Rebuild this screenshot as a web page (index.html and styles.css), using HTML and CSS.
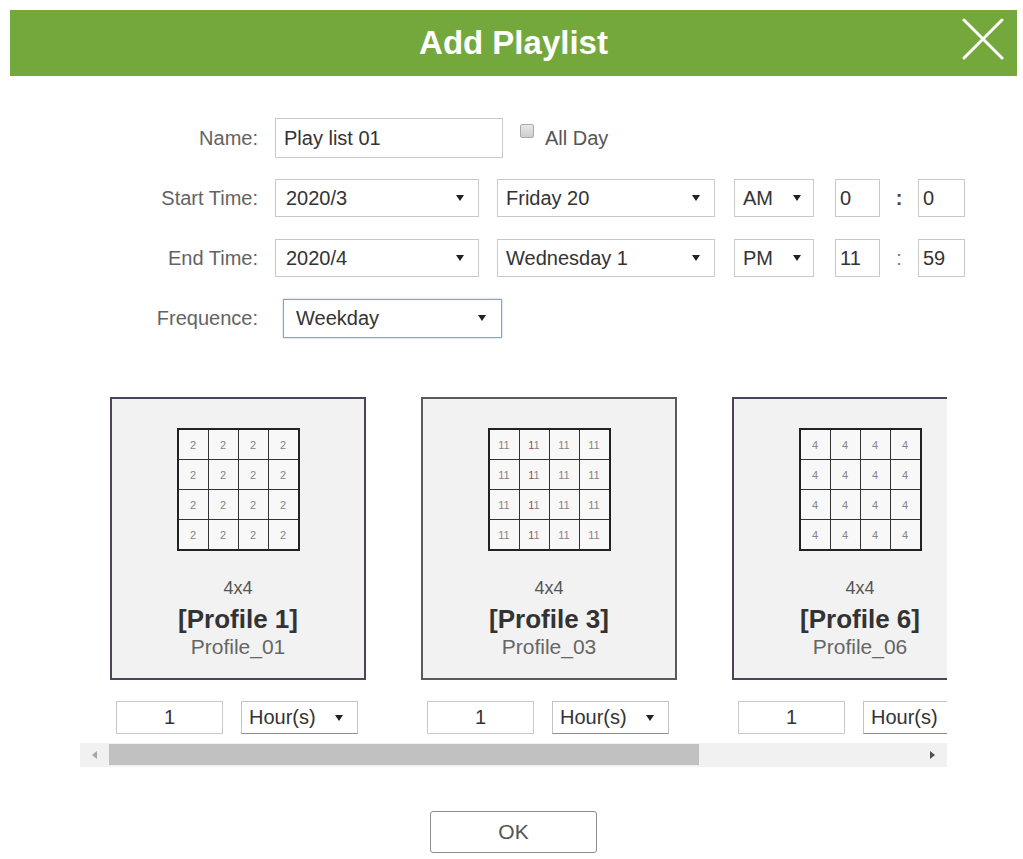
FILE: index.html
```html
<!DOCTYPE html>
<html lang="en">
<head>
    <meta charset="UTF-8">
    <title>Add Playlist</title>
    <link rel="stylesheet" href="styles.css">
</head>
<body>
    <div class="dialog">
        <div class="dialog-header">
            <h1>Add Playlist</h1>
            <span class="close">
                <svg width="42" height="42" viewBox="0 0 42 42">
                    <path d="M2 2 L40 40 M40 2 L2 40" stroke="#fff" stroke-width="3" stroke-linecap="round" fill="none"/>
                </svg>
            </span>
        </div>

        <div class="form">
            <div class="row">
                <span class="label">Name:</span>
                <input class="field w-name" type="text" value="Play list 01">
                <span class="check"></span>
                <span class="check-label">All Day</span>
            </div>
            <div class="row">
                <span class="label">Start Time:</span>
                <div class="field select w-month"><span>2020/3</span><span class="arrow"></span></div>
                <div class="field select w-day"><span>Friday 20</span><span class="arrow"></span></div>
                <div class="field select w-ampm"><span>AM</span><span class="arrow"></span></div>
                <input class="field w-hour" type="text" value="0">
                <span class="colon">:</span>
                <input class="field w-min" type="text" value="0">
            </div>
            <div class="row">
                <span class="label">End Time:</span>
                <div class="field select w-month"><span>2020/4</span><span class="arrow"></span></div>
                <div class="field select w-day"><span>Wednesday 1</span><span class="arrow"></span></div>
                <div class="field select w-ampm"><span>PM</span><span class="arrow"></span></div>
                <input class="field w-hour" type="text" value="11">
                <span class="colon light">:</span>
                <input class="field w-min" type="text" value="59">
            </div>
            <div class="row">
                <span class="label">Frequence:</span>
                <div class="field select w-freq focus"><span>Weekday</span><span class="arrow"></span></div>
            </div>
        </div>

        <div class="strip">
            <div class="track">
                <div class="slot">
                    <div class="card">
                        <table class="cells">
                            <tr><td>2</td><td>2</td><td>2</td><td>2</td></tr>
                            <tr><td>2</td><td>2</td><td>2</td><td>2</td></tr>
                            <tr><td>2</td><td>2</td><td>2</td><td>2</td></tr>
                            <tr><td>2</td><td>2</td><td>2</td><td>2</td></tr>
                        </table>
                        <div class="grid-size">4x4</div>
                        <div class="profile-name">[Profile 1]</div>
                        <div class="profile-id">Profile_01</div>
                    </div>
                    <div class="dur">
                        <input class="field dur-input" type="text" value="1">
                        <div class="field select dur-select"><span>Hour(s)</span><span class="arrow"></span></div>
                    </div>
                </div>

                <div class="slot">
                    <div class="card plain">
                        <table class="cells">
                            <tr><td>11</td><td><span class="red">1</span>1</td><td>11</td><td>11</td></tr>
                            <tr><td>11</td><td><span class="red">1</span>1</td><td>11</td><td>11</td></tr>
                            <tr><td>11</td><td><span class="red">1</span>1</td><td>11</td><td>11</td></tr>
                            <tr><td>11</td><td><span class="red">1</span>1</td><td>11</td><td>11</td></tr>
                        </table>
                        <div class="grid-size">4x4</div>
                        <div class="profile-name">[Profile 3]</div>
                        <div class="profile-id">Profile_03</div>
                    </div>
                    <div class="dur">
                        <input class="field dur-input" type="text" value="1">
                        <div class="field select dur-select"><span>Hour(s)</span><span class="arrow"></span></div>
                    </div>
                </div>

                <div class="slot">
                    <div class="card">
                        <table class="cells">
                            <tr><td>4</td><td>4</td><td>4</td><td>4</td></tr>
                            <tr><td>4</td><td>4</td><td>4</td><td>4</td></tr>
                            <tr><td>4</td><td>4</td><td>4</td><td>4</td></tr>
                            <tr><td>4</td><td>4</td><td>4</td><td>4</td></tr>
                        </table>
                        <div class="grid-size">4x4</div>
                        <div class="profile-name">[Profile 6]</div>
                        <div class="profile-id">Profile_06</div>
                    </div>
                    <div class="dur">
                        <input class="field dur-input" type="text" value="1">
                        <div class="field select dur-select"><span>Hour(s)</span><span class="arrow"></span></div>
                    </div>
                </div>
            </div>
        </div>

        <div class="scrollbar">
            <span class="sb-btn"><span class="tri-left"></span></span>
            <span class="thumb"></span>
            <span class="sb-space"></span>
            <span class="sb-btn"><span class="tri-right"></span></span>
        </div>

        <div class="actions">
            <button class="btn-ok">OK</button>
        </div>
    </div>
</body>
</html>
```

FILE: styles.css
```css
body {
    margin: 0;
    background: #fff;
    font-family: "Liberation Sans", Arial, sans-serif;
}
.dialog {
    margin: 10px 6px 0 10px;
}
.dialog-header {
    position: relative;
    height: 66px;
    background: #74a83c;
    display: flex;
    align-items: center;
    justify-content: center;
}
.dialog-header h1 {
    margin: 0;
    color: #fff;
    font-size: 33px;
    font-weight: bold;
}
.close {
    position: absolute;
    right: 13px;
    top: 8px;
    width: 42px;
    height: 42px;
}

/* form */
.form {
    padding-top: 43px;
}
.row {
    display: flex;
    align-items: center;
    height: 38px;
    margin-bottom: 22px;
}
.row:last-child { margin-bottom: 0; }
.label {
    width: 248px;
    margin-right: 17px;
    text-align: right;
    font-size: 20px;
    color: #636363;
}
.field {
    box-sizing: border-box;
    height: 38px;
    border: 1px solid #c9c9c9;
    background: #fff;
    font-family: inherit;
    font-size: 20px;
    color: #333;
}
input.field {
    padding: 0 4px;
    outline: none;
}
.select {
    display: flex;
    align-items: center;
    justify-content: space-between;
    padding: 0 14px 0 10px;
}
.arrow {
    width: 0;
    height: 0;
    border-left: 4px solid transparent;
    border-right: 4px solid transparent;
    border-top: 6px solid #222;
}
.w-name { width: 228px; padding-left: 8px !important; height: 40px; }
.w-month { width: 204px; margin-right: 18px; }
.w-day { width: 218px; margin-right: 19px; padding-left: 8px; }
.w-ampm { width: 80px; margin-right: 21px; padding: 0 12px 0 8px; }
.w-hour { width: 45px; }
.w-min { width: 47px; }
.w-freq { width: 219px; height: 39px; margin-left: 8px; padding: 0 15px 0 12px; }
.focus {
    border-color: #87a3cc;
    box-shadow: 0 0 2px #a9c0e2;
}
.colon {
    width: 38px;
    text-align: center;
    font-size: 20px;
    font-weight: bold;
    color: #444;
}
.colon.light { font-weight: normal; color: #777; }
.check {
    box-sizing: border-box;
    width: 14px;
    height: 14px;
    margin: 0 0 14px 17px;
    border: 1px solid #ababab;
    border-radius: 2px;
    background: linear-gradient(#e8e8e8, #cdcdcd);
}
.check-label {
    margin-left: 11px;
    font-size: 20px;
    color: #555;
}

/* profiles */
.strip {
    width: 867px;
    margin: 60px 0 0 70px;
    overflow: hidden;
}
.track {
    display: flex;
    gap: 55px;
    padding-left: 30px;
}
.slot {
    flex: 0 0 256px;
}
.card {
    box-sizing: border-box;
    height: 283px;
    padding-top: 29px;
    border: 2px solid #4e4358;
    background: #f2f2f2;
    text-align: center;
}
.card.plain { border-color: #5a5a5a; }
.cells {
    margin: 0 auto;
    border-collapse: collapse;
    border: 2px solid #222;
}
.cells td {
    width: 29px;
    height: 29px;
    padding: 0;
    border: 1px solid #333;
    background: #f8f8f8;
    font-size: 11px;
    color: #858585;
    text-align: center;
}
.red { color: #a5445a; }
.grid-size {
    margin-top: 26px;
    font-size: 18px;
    line-height: 22px;
    color: #555;
}
.profile-name {
    margin-top: 5px;
    font-size: 26px;
    line-height: 30px;
    font-weight: bold;
    color: #333;
}
.profile-id {
    font-size: 21px;
    line-height: 25px;
    color: #666;
}
.dur {
    display: flex;
    gap: 18px;
    margin-top: 21px;
    padding-left: 6px;
}
.dur-input {
    width: 107px;
    height: 33px;
    text-align: center;
}
.dur-select {
    width: 117px;
    height: 33px;
    padding: 0 14px 0 7px;
    border-color: #c4c4c4;
    border-bottom-color: #8f8f8f;
}

/* fake horizontal scrollbar */
.scrollbar {
    display: flex;
    width: 867px;
    height: 24px;
    margin: 9px 0 0 70px;
    background: #f1f1f1;
}
.sb-btn {
    width: 29px;
    display: flex;
    align-items: center;
    justify-content: center;
}
.tri-left {
    border-top: 4px solid transparent;
    border-bottom: 4px solid transparent;
    border-right: 5px solid #a6a6a6;
}
.tri-right {
    border-top: 4px solid transparent;
    border-bottom: 4px solid transparent;
    border-left: 5px solid #505050;
}
.thumb {
    width: 590px;
    margin: 1px 0 2px;
    background: #c1c1c1;
}
.sb-space { flex: 1; }

.actions {
    display: flex;
    justify-content: center;
    margin-top: 44px;
}
.btn-ok {
    width: 167px;
    height: 42px;
    border: 1px solid #8c8c8c;
    border-radius: 3px;
    background: #fff;
    font-family: inherit;
    font-size: 21px;
    color: #555;
}
```
